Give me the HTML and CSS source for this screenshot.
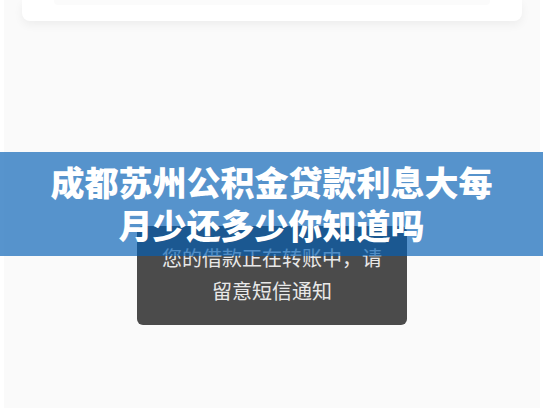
FILE: index.html
```html
<!DOCTYPE html>
<html lang="zh-CN">
<head>
<meta charset="utf-8">
<meta name="viewport" content="width=device-width, initial-scale=1">
<title>成都苏州公积金贷款利息大每月少还多少你知道吗</title>
<link rel="stylesheet" href="styles.css">
</head>
<body>
<main class="page">
  <section class="card"><div class="card-field"></div></section>
  <div class="toast" role="status">您的借款正在转账中，请<br>留意短信通知</div>
  <header class="banner">
    <h1 class="banner-title">成都苏州公积金贷款利息大每<br>月少还多少你知道吗</h1>
  </header>
</main>
</body>
</html>
```
FILE: styles.css
```css
* {
  box-sizing: border-box;
}

body {
  margin: 0;
  background: #fff;
  font-family: "Noto Sans CJK SC", sans-serif;
}

.page {
  position: relative;
  min-height: 100vh;
  margin: 0 3px 0 4px;
  padding: 0 18px;
  background: #fafafa;
}

.card {
  padding: 0 32px 16px;
  background: #fff;
  border-radius: 0 0 8px 8px;
  box-shadow: 0 4px 10px rgba(0, 0, 0, 0.05);
}

.card-field {
  height: 5px;
  background: #fbfbfb;
  border-radius: 0 0 4px 4px;
}

/* Message floating over the page */
.toast {
  position: absolute;
  top: 226px;
  left: 50%;
  width: 270px;
  padding: 15px 12px 18px;
  transform: translateX(-50%);
  background: #4b4b4b;
  border-radius: 6px;
  color: #e8e8e8;
  font-size: 20px;
  line-height: 33px;
  text-align: center;
}

/* Translucent strip across the full window */
.banner {
  position: absolute;
  top: 152px;
  right: -3px;
  left: -4px;
  padding: 8px 16px 10px;
  background: rgba(4, 95, 180, 0.67);
}

.banner-title {
  margin: 0;
  color: #fff;
  font-size: 34px;
  font-weight: 900;
  line-height: 43px;
  text-align: center;
}
```
